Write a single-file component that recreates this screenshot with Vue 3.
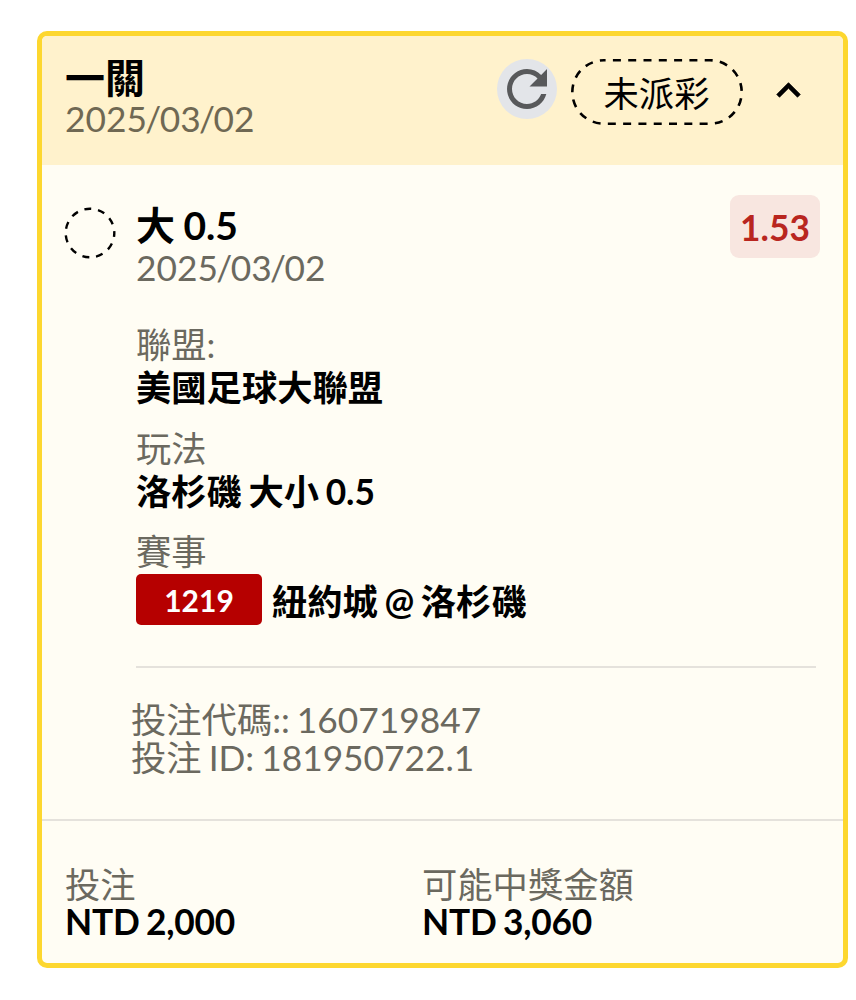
<template>
  <div class="bet-page">
    <article class="bet-card">
      <header class="card-header">
        <div class="header-info">
          <h2 class="card-title">{{ bet.title }}</h2>
          <div class="date">
            <template v-for="(part, i) in dateParts" :key="i"><span v-if="i" class="slash">/</span>{{ part }}</template>
          </div>
        </div>
        <button class="refresh-btn" aria-label="重新整理">
          <svg viewBox="0 0 24 24" width="60" height="60">
            <path
              d="M17.65 6.35C16.2 4.9 14.21 4 12 4c-4.42 0-7.99 3.58-7.99 8s3.57 8 7.99 8c3.73 0 6.84-2.55 7.73-6h-2.08c-.82 2.33-3.04 4-5.65 4-3.31 0-6-2.69-6-6s2.69-6 6-6c1.66 0 3.14.69 4.22 1.78L13 11h7V4l-2.35 2.35z"
              fill="#58595b"
            />
          </svg>
        </button>
        <div class="status-pill">
          <svg class="status-outline" viewBox="0 0 172 66" width="172" height="66">
            <rect x="1.3" y="1.3" width="169.4" height="63.4" rx="31.7" />
          </svg>
          <span>{{ bet.status }}</span>
        </div>
        <svg class="chevron" viewBox="0 0 24 24" width="47" height="47">
          <path d="M12 8l-6 6 1.41 1.41L12 10.83l4.59 4.58L18 14z" />
        </svg>
      </header>

      <section class="card-body">
        <svg class="pending-icon" viewBox="0 0 52 52" width="52" height="52">
          <circle cx="26" cy="26" r="24.3" />
        </svg>
        <div class="selection">
          <div class="selection-head">
            <div>
              <h3 class="selection-title">{{ bet.selection }}</h3>
              <div class="date">
                <template v-for="(part, i) in dateParts" :key="i"><span v-if="i" class="slash">/</span>{{ part }}</template>
              </div>
            </div>
            <span class="odds">{{ bet.odds }}</span>
          </div>

          <dl class="details">
            <div v-for="row in details" :key="row.label" class="detail">
              <dt>{{ row.label }}</dt>
              <dd :class="{ match: row.code }">
                <span v-if="row.code" class="match-code">{{ row.code }}</span>
                <span class="detail-value">{{ row.value }}</span>
              </dd>
            </div>
          </dl>

          <div class="codes">
            <div>投注代碼:: {{ bet.code }}</div>
            <div>投注 ID: {{ bet.id }}</div>
          </div>
        </div>
      </section>

      <footer class="card-footer">
        <div v-for="total in totals" :key="total.label">
          <div class="total-label">{{ total.label }}</div>
          <div class="total-value">{{ total.value }}</div>
        </div>
      </footer>
    </article>
  </div>
</template>

<script setup>
import { computed } from 'vue';

const bet = {
  title: '一關',
  date: '2025/03/02',
  status: '未派彩',
  selection: '大 0.5',
  odds: '1.53',
  code: '160719847',
  id: '181950722.1'
};

const dateParts = computed(() => bet.date.split('/'));

const details = [
  { label: '聯盟:', value: '美國足球大聯盟' },
  { label: '玩法', value: '洛杉磯 大小 0.5' },
  { label: '賽事', value: '紐約城 @ 洛杉磯', code: '1219' }
];

const totals = [
  { label: '投注', value: 'NTD 2,000' },
  { label: '可能中獎金額', value: 'NTD 3,060' }
];
</script>

<style>
body {
  background: #fff;
}
</style>

<style scoped>
.bet-page {
  box-sizing: border-box;
  width: 856px;
  height: 1000px;
  padding: 31px 8px 32px 37px;
  font-family: Lato, "Noto Sans CJK TC", sans-serif;
  font-size: 35.3px;
  line-height: 38px;
  word-spacing: -2px;
  color: #000;
  white-space: nowrap;
}
.bet-card {
  box-sizing: border-box;
  display: flex;
  flex-direction: column;
  height: 937px;
  border: 5px solid #fdd72f;
  border-radius: 10px;
  background: #fffdf4;
  overflow: hidden;
}
h2,
h3,
dl,
dd {
  margin: 0;
}
.card-header {
  box-sizing: border-box;
  display: flex;
  align-items: flex-start;
  height: 129px;
  padding: 20px 31px 0 23px;
  background: #fff2cc;
}
.header-info {
  flex: 1;
}
.card-title {
  font-size: 40px;
  line-height: 44px;
  font-weight: 700;
}
.date {
  color: #6b695f;
}
.slash {
  margin: 0 -1.6px;
}
.card-header .date {
  color: #6f6853;
}
.refresh-btn {
  width: 60px;
  height: 60px;
  margin: 3px 13.5px 0 0;
  padding: 0;
  border: 0;
  border-radius: 50%;
  background: #e3e5e9;
}
.refresh-btn svg {
  display: block;
}
.status-pill {
  position: relative;
  width: 172px;
  height: 66px;
  margin: 3px 22.5px 0 0;
  line-height: 70px;
  text-align: center;
}
.status-outline {
  position: absolute;
  inset: 0;
}
.status-outline rect {
  fill: none;
  stroke: #000;
  stroke-width: 2.6;
  stroke-dasharray: 8 7.3;
  stroke-dashoffset: 6.4;
}
.chevron {
  margin-top: 11px;
}
.chevron path {
  stroke: #000;
  stroke-width: 0.4;
  stroke-linejoin: round;
}
.card-body {
  box-sizing: border-box;
  display: flex;
  height: 654px;
  padding: 30px 23px 0 22px;
}
.pending-icon {
  flex: none;
  margin: 12px 20px 0 0;
}
.pending-icon circle {
  fill: none;
  stroke: #000;
  stroke-width: 2.4;
  stroke-dasharray: 7 6.88;
  stroke-dashoffset: 3;
}
.selection {
  flex: 1;
}
.selection-head {
  display: flex;
  justify-content: space-between;
  align-items: flex-start;
}
.selection-head > div {
  padding-top: 9px;
}
.selection-title {
  margin-bottom: 2px;
  font-size: 39px;
  line-height: 43px;
  font-weight: 700;
  word-spacing: -1px;
}
.odds {
  width: 90px;
  height: 63px;
  border-radius: 9px;
  background: #f8e6e0;
  color: #b9261f;
  font-weight: 700;
  line-height: 65px;
  text-align: center;
}
.details {
  display: flex;
  flex-direction: column;
  gap: 17.5px;
  margin: 36px 4px 0 0;
  padding-bottom: 41px;
  border-bottom: 2px solid #e5e2dc;
  line-height: 43px;
}
.detail dt {
  color: #6b695f;
}
.detail dd {
  font-weight: 700;
}
.match {
  display: flex;
  align-items: center;
  gap: 10px;
  margin-top: 1px;
  line-height: 51px;
}
.match .detail-value {
  padding-top: 2px;
  height: 49px;
}
.match-code {
  width: 126px;
  height: 51px;
  border-radius: 5px;
  background: #b60000;
  color: #fff;
  font-size: 30px;
  line-height: 53px;
  text-align: center;
}
.codes {
  margin: 33px 0 0 -5px;
  color: #6b695f;
}
.card-footer {
  flex: 1;
  display: grid;
  grid-template-columns: 357px 1fr;
  padding: 45px 23px 0;
  border-top: 2px solid #e5e2dc;
}
.total-label {
  color: #6b695f;
}
.total-value {
  font-weight: 700;
  line-height: 36px;
  letter-spacing: -0.2px;
}
</style>
